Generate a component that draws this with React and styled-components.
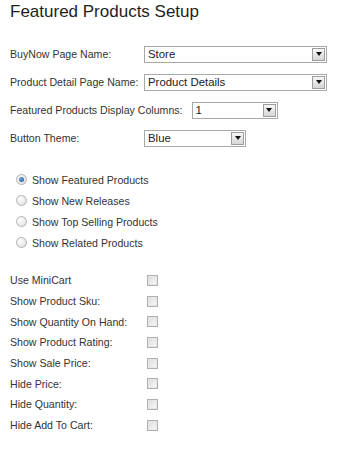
import styled, { createGlobalStyle } from "styled-components";

const GlobalStyle = createGlobalStyle`
  body {
    margin: 0;
    background: #fff;
    font-family: "Liberation Sans", Arial, sans-serif;
    color: #333;
  }
`;

const Page = styled.div`
  padding: 2px 0 0 10px;
`;

const Title = styled.h1`
  margin: 0;
  font-size: 17px;
  font-weight: normal;
  line-height: 20px;
  color: #1e1e1e;
`;

const Fields = styled.div`
  display: flex;
  flex-direction: column;
  margin-top: 18px;
`;

const FieldRow = styled.div`
  display: flex;
  align-items: center;
  height: 28px;
`;

const FieldLabel = styled.span`
  min-width: 134px;
  margin-right: ${(p) => p.$gap || 0}px;
  font-size: 10.6px;
  white-space: nowrap;
`;

const SelectBox = styled.div`
  display: flex;
  align-items: stretch;
  box-sizing: border-box;
  width: ${(p) => p.$w}px;
  height: 17px;
  padding: 1px;
  border: 1px solid #a9a9a9;
  background: #fff;
`;

const SelectValue = styled.span`
  flex: 1;
  padding-left: 2px;
  font-size: 11.4px;
  line-height: 13px;
  color: #222;
`;

const ArrowButton = styled.span`
  display: flex;
  align-items: center;
  justify-content: center;
  box-sizing: border-box;
  width: 13px;
  border: 1px solid #9d9d9d;
  background: linear-gradient(#f7f7f7, #d6d6d6);

  &::after {
    content: "";
    border-left: 3.5px solid transparent;
    border-right: 3.5px solid transparent;
    border-top: 4px solid #111;
  }
`;

const RadioGroup = styled.div`
  display: flex;
  flex-direction: column;
  margin-top: 17px;
`;

const RadioRow = styled.label`
  display: flex;
  align-items: center;
  height: 21px;
  padding-left: 6px;
  font-size: 10.6px;
`;

const Radio = styled.span`
  display: flex;
  align-items: center;
  justify-content: center;
  box-sizing: border-box;
  width: 11px;
  height: 11px;
  margin-right: 5px;
  border-radius: 50%;
  border: 1px solid #b3b3b3;
  background: radial-gradient(circle at 35% 35%, #fff, #d9d9d9);

  &::after {
    content: "";
    display: ${(p) => (p.$checked ? "block" : "none")};
    width: 5px;
    height: 5px;
    border-radius: 50%;
    background: radial-gradient(circle at 40% 40%, #6aa4e0, #1d5295);
  }
`;

const CheckGroup = styled.div`
  display: flex;
  flex-direction: column;
  margin-top: 17px;
`;

const CheckRow = styled.label`
  display: flex;
  align-items: center;
  height: 20.7px;
`;

const CheckLabel = styled.span`
  min-width: 137px;
  font-size: 10.6px;
  white-space: nowrap;
`;

const Checkbox = styled.span`
  box-sizing: border-box;
  width: 11px;
  height: 11px;
  border: 1px solid #b0b0b0;
  box-shadow: inset 0 0 0 1px #e6e6e6;
  background: linear-gradient(135deg, #d9d9d9, #fbfbfb);
`;

const selects = [
  { label: "BuyNow Page Name:", value: "Store", w: 183 },
  { label: "Product Detail Page Name:", value: "Product Details", w: 183 },
  { label: "Featured Products Display Columns:", value: "1", w: 86, gap: 9 },
  { label: "Button Theme:", value: "Blue", w: 102 },
];

const radios = [
  "Show Featured Products",
  "Show New Releases",
  "Show Top Selling Products",
  "Show Related Products",
];

const checks = [
  "Use MiniCart",
  "Show Product Sku:",
  "Show Quantity On Hand:",
  "Show Product Rating:",
  "Show Sale Price:",
  "Hide Price:",
  "Hide Quantity:",
  "Hide Add To Cart:",
];

export default function App() {
  return (
    <>
      <GlobalStyle />
      <Page>
        <Title>Featured Products Setup</Title>

        <Fields>
          {selects.map((s) => (
            <FieldRow key={s.label}>
              <FieldLabel $gap={s.gap}>{s.label}</FieldLabel>
              <SelectBox $w={s.w}>
                <SelectValue>{s.value}</SelectValue>
                <ArrowButton />
              </SelectBox>
            </FieldRow>
          ))}
        </Fields>

        <RadioGroup>
          {radios.map((r, i) => (
            <RadioRow key={r}>
              <Radio $checked={i === 0} />
              {r}
            </RadioRow>
          ))}
        </RadioGroup>

        <CheckGroup>
          {checks.map((c) => (
            <CheckRow key={c}>
              <CheckLabel>{c}</CheckLabel>
              <Checkbox />
            </CheckRow>
          ))}
        </CheckGroup>
      </Page>
    </>
  );
}
